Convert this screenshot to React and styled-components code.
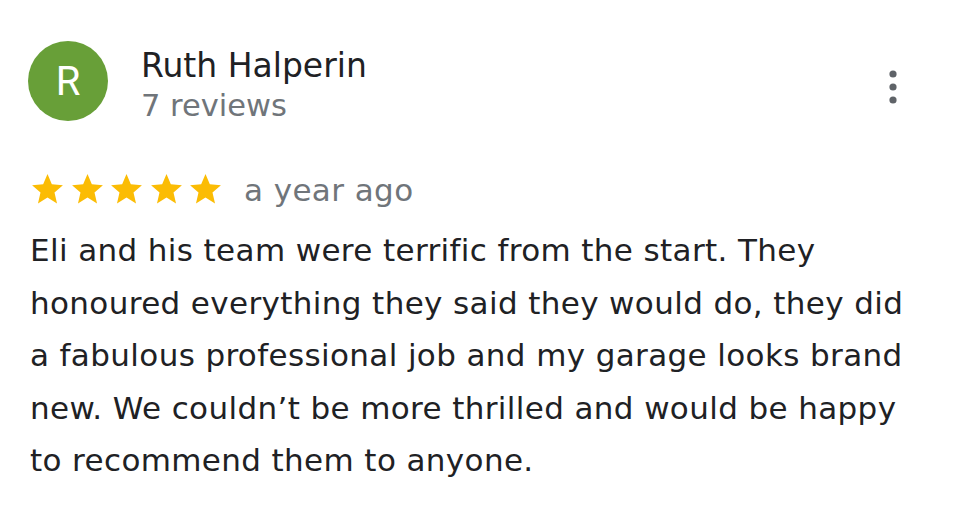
import React from 'react'
import styled, { createGlobalStyle } from 'styled-components'

const GlobalStyle = createGlobalStyle`
    body {
        margin: 0;
        background: #fff;
        font-family: "DejaVu Sans", Roboto, sans-serif;
    }
`;

const Star = ({ color = '#fbbc04' }) => (
    <svg width="37" height="37" viewBox="0 0 24 24">
        <path
            fill={color}
            d="M12 17.27L18.18 21l-1.64-7.03L22 9.24l-7.19-.61L12 2 9.19 8.63 2 9.24l5.46 4.73L5.82 21z"
        />
    </svg>
);

const MoreIcon = () => (
    <svg width="10" height="36" viewBox="0 0 10 36">
        <circle cx="5" cy="5" r="3.6" fill="#5f6368" />
        <circle cx="5" cy="18" r="3.6" fill="#5f6368" />
        <circle cx="5" cy="31" r="3.6" fill="#5f6368" />
    </svg>
);

export default function App() {
    const stars = [1, 2, 3, 4, 5];
    return (
        <>
            <GlobalStyle />
            <Card>
                <Header>
                    <Avatar>R</Avatar>
                    <Author>
                        <Name>Ruth Halperin</Name>
                        <Count>7 reviews</Count>
                    </Author>
                    <MenuButton>
                        <MoreIcon />
                    </MenuButton>
                </Header>
                <RatingRow>
                    <Stars>
                        {stars.map((s) => <Star key={s} />)}
                    </Stars>
                    <When>a year ago</When>
                </RatingRow>
                <Body>
                    Eli and his team were terrific from the start. They honoured everything they said they would do, they did a fabulous professional job and my garage looks brand new. We couldn’t be more thrilled and would be happy to recommend them to anyone.
                </Body>
            </Card>
        </>
    )
}

const Card = styled.div`
    width: 956px;
    height: 522px;
    box-sizing: border-box;
    padding: 41px 36px 0 30px;
    display: flex;
    flex-direction: column;
`;

const Header = styled.div`
    display: flex;
    align-items: flex-start;
`;

const Avatar = styled.div`
    width: 80px;
    height: 80px;
    margin-left: -2px;
    border-radius: 50%;
    background: #689f38;
    color: #fff;
    display: flex;
    align-items: center;
    justify-content: center;
    font-family: Roboto, sans-serif;
    font-size: 40px;
    flex-shrink: 0;
`;

const Author = styled.div`
    display: flex;
    flex-direction: column;
    margin-left: 33px;
    flex: 1;
`;

const Name = styled.div`
    font-size: 33px;
    line-height: 40px;
    margin-top: 5px;
    color: #202124;
`;

const Count = styled.div`
    font-size: 30.5px;
    line-height: 38px;
    margin-top: 1px;
    color: #70757a;
`;

const MenuButton = styled.div`
    margin-top: 28px;
    margin-right: 22px;
    display: flex;
`;

const RatingRow = styled.div`
    display: flex;
    align-items: center;
    margin-top: 46px;
`;

const Stars = styled.div`
    display: flex;
    gap: 2.5px;
    margin-left: -1px;
    svg {
        display: block;
    }
`;

const When = styled.span`
    margin-left: 20px;
    font-size: 31px;
    letter-spacing: 0.4px;
    color: #70757a;
`;

const Body = styled.p`
    margin: 16px 0 0;
    font-size: 31px;
    letter-spacing: 0.37px;
    line-height: 52.6px;
    color: #202124;
`;
